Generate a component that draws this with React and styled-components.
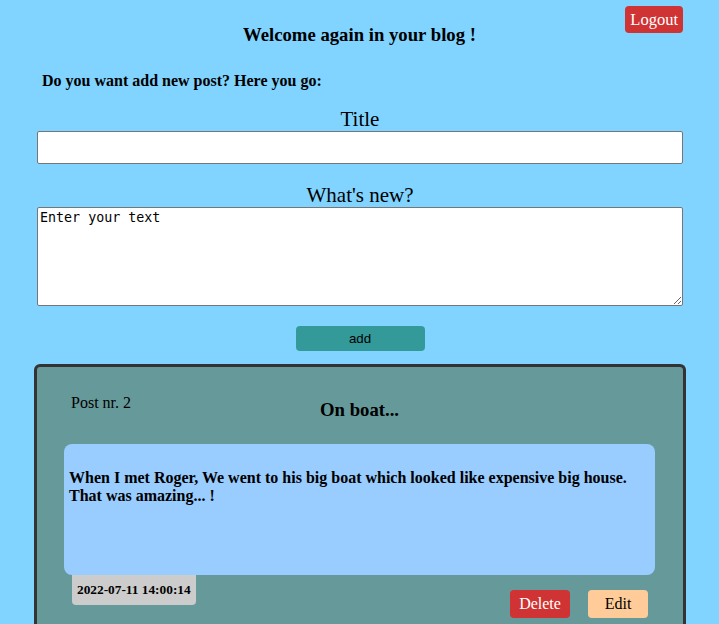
import styled, { createGlobalStyle } from 'styled-components';

const GlobalStyle = createGlobalStyle`
	html, body {
		margin: 0;
		padding: 0;
		background: #80d4ff;
		font-family: "Liberation Serif", "Times New Roman", serif;
		color: #000;
	}
`;

const App = () => {
	return (
		<>
			<GlobalStyle />
			<StyledPage>
				<Header>
					<Heading>Welcome again in your blog !</Heading>
					<Button $variant="logout">Logout</Button>
				</Header>

				<Intro>Do you want add new post? Here you go:</Intro>

				<Form>
					<Label>Title</Label>
					<TitleInput type="text" />
					<Label $gap>What's new?</Label>
					<TextArea defaultValue="Enter your text" />
					<AddButton>add</AddButton>
				</Form>

				<Card>
					<CardTop>
						<PostNumber>Post nr. 2</PostNumber>
						<PostTitle>On boat...</PostTitle>
					</CardTop>
					<PostBody>
						When I met Roger, We went to his big boat which looked like expensive big house. That was amazing... !
					</PostBody>
					<CardBottom>
						<DateTag>2022-07-11 14:00:14</DateTag>
						<Actions>
							<Button $variant="delete">Delete</Button>
							<Button $variant="edit">Edit</Button>
						</Actions>
					</CardBottom>
				</Card>
			</StyledPage>
		</>
	);
};

const colors = {
	logout: { bg: '#cf3333', fg: '#fff' },
	delete: { bg: '#cf3333', fg: '#fff' },
	edit: { bg: '#ffcc99', fg: '#000' },
};

const StyledPage = styled.div`
	display: flex;
	flex-direction: column;
	min-height: 624px;
`;

const Header = styled.div`
	display: grid;
	grid-template-columns: 1fr auto 1fr;
	padding: 6px 36px 0 36px;
`;

const Heading = styled.h3`
	grid-column: 2;
	margin: 18px 0 0;
	font-size: 18.72px;
	font-weight: bold;
	line-height: 22px;
`;

const Button = styled.button`
	border: none;
	border-radius: 4px;
	font-family: "Liberation Serif", "Times New Roman", serif;
	font-size: 16px;
	height: 28px;
	padding: 0 5px;
	cursor: pointer;
	background: ${({ $variant }) => colors[$variant].bg};
	color: ${({ $variant }) => colors[$variant].fg};
	${({ $variant }) =>
		$variant === 'logout'
			? `grid-column: 3; justify-self: end; align-self: start; height: 27px; font-size: 16.5px;`
			: `width: 60px;`}
`;

const Intro = styled.h4`
	margin: 26px 0 0 42px;
	font-size: 16px;
	line-height: 18px;
`;

const Form = styled.div`
	display: flex;
	flex-direction: column;
	align-items: center;
	padding: 0 36px 0 37px;
`;

const Label = styled.div`
	font-size: 21px;
	line-height: 24px;
	margin-top: ${({ $gap }) => ($gap ? '19px' : '17px')};
`;

const TitleInput = styled.input`
	box-sizing: border-box;
	width: 100%;
	height: 33px;
	border: 1px solid #767676;
	border-radius: 2px;
	background: #fff;
`;

const TextArea = styled.textarea`
	box-sizing: border-box;
	width: 100%;
	height: 99px;
	border: 1px solid #767676;
	border-radius: 2px;
	background: #fff;
	padding: 2px;
	font-family: "DejaVu Sans Mono", monospace;
	font-size: 13.33px;
	resize: vertical;
`;

const AddButton = styled.button`
	margin-top: 20px;
	width: 129px;
	height: 25px;
	border: none;
	border-radius: 4px;
	background: #339999;
	color: #000;
	font-family: "Liberation Sans", Arial, sans-serif;
	font-size: 13.33px;
`;

const Card = styled.div`
	margin: 13px 33px 0 34px;
	border: 3px solid #333;
	border-bottom: none;
	border-radius: 6px 6px 0 0;
	background: #669999;
	padding: 0 28px 0 27px;
	display: flex;
	flex-direction: column;
	flex: 1;
`;

const CardTop = styled.div`
	display: grid;
	grid-template-columns: 1fr auto 1fr;
	padding-top: 27px;
	height: 77px;
	box-sizing: border-box;
`;

const PostNumber = styled.span`
	font-size: 16px;
	line-height: 18px;
	padding-left: 7px;
`;

const PostTitle = styled.h3`
	margin: 5px 0 0;
	font-size: 18.72px;
	line-height: 22px;
`;

const PostBody = styled.div`
	box-sizing: border-box;
	height: 131px;
	background: #99ccff;
	border-radius: 8px;
	padding: 25px 5px 0;
	font-weight: bold;
	font-size: 16px;
	line-height: 18px;
`;

const CardBottom = styled.div`
	display: flex;
	justify-content: space-between;
	align-items: flex-start;
	padding: 0 7px 0 8px;
`;

const DateTag = styled.div`
	background: #cccccc;
	border-radius: 0 0 4px 4px;
	font-size: 13.33px;
	font-weight: bold;
	padding: 7px 5px 7px;
	line-height: 16px;
`;

const Actions = styled.div`
	display: flex;
	gap: 18px;
	margin-top: 15px;
`;

export default App;
